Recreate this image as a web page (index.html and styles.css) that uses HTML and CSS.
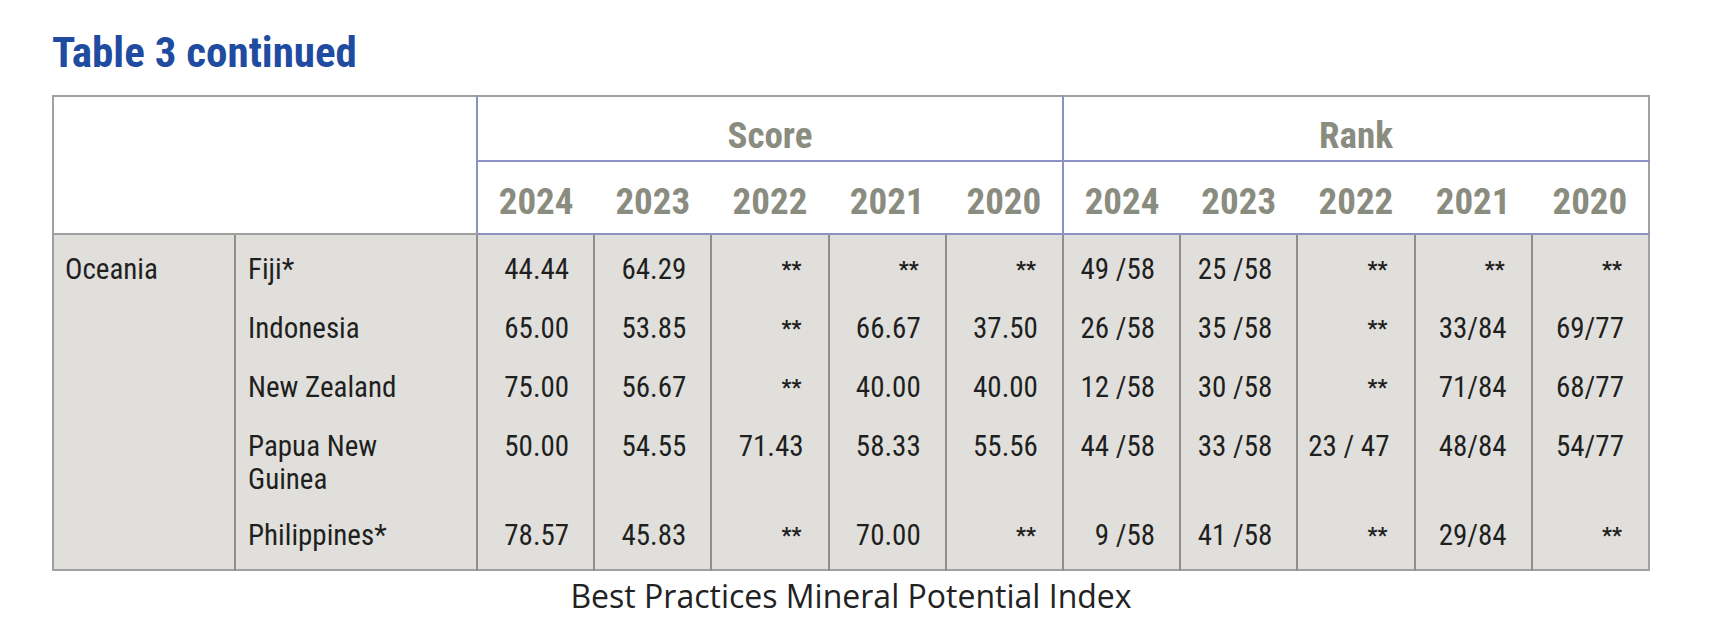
FILE: index.html
```html
<!DOCTYPE html>
<html lang="en">
<head>
<meta charset="utf-8">
<title>Table 3 continued</title>
<link rel="stylesheet" href="styles.css">
</head>
<body>
<div class="page">
  <h1 class="title">Table 3 continued</h1>
  <table class="data">
    <colgroup>
      <col class="c-region">
      <col class="c-country">
      <col span="10" class="c-num">
    </colgroup>
    <thead>
      <tr class="group-row">
        <th class="blank" colspan="2" rowspan="2"></th>
        <th class="group" colspan="5">Score</th>
        <th class="group" colspan="5">Rank</th>
      </tr>
      <tr class="year-row">
        <th class="yr first">2024</th>
        <th class="yr">2023</th>
        <th class="yr">2022</th>
        <th class="yr">2021</th>
        <th class="yr">2020</th>
        <th class="yr first">2024</th>
        <th class="yr">2023</th>
        <th class="yr">2022</th>
        <th class="yr">2021</th>
        <th class="yr">2020</th>
      </tr>
    </thead>
    <tbody>
      <tr>
        <td class="region" rowspan="5">Oceania</td>
        <td class="country">Fiji*</td>
        <td class="num">44.44</td>
        <td class="num">64.29</td>
        <td class="num na">**</td>
        <td class="num na">**</td>
        <td class="num na">**</td>
        <td class="num">49 /58</td>
        <td class="num">25 /58</td>
        <td class="num na">**</td>
        <td class="num na">**</td>
        <td class="num na">**</td>
      </tr>
      <tr>
        <td class="country">Indonesia</td>
        <td class="num">65.00</td>
        <td class="num">53.85</td>
        <td class="num na">**</td>
        <td class="num">66.67</td>
        <td class="num">37.50</td>
        <td class="num">26 /58</td>
        <td class="num">35 /58</td>
        <td class="num na">**</td>
        <td class="num">33/84</td>
        <td class="num">69/77</td>
      </tr>
      <tr>
        <td class="country">New Zealand</td>
        <td class="num">75.00</td>
        <td class="num">56.67</td>
        <td class="num na">**</td>
        <td class="num">40.00</td>
        <td class="num">40.00</td>
        <td class="num">12 /58</td>
        <td class="num">30 /58</td>
        <td class="num na">**</td>
        <td class="num">71/84</td>
        <td class="num">68/77</td>
      </tr>
      <tr class="tall">
        <td class="country">Papua New<br>Guinea</td>
        <td class="num">50.00</td>
        <td class="num">54.55</td>
        <td class="num">71.43</td>
        <td class="num">58.33</td>
        <td class="num">55.56</td>
        <td class="num">44 /58</td>
        <td class="num">33 /58</td>
        <td class="num">23 / 47</td>
        <td class="num">48/84</td>
        <td class="num">54/77</td>
      </tr>
      <tr class="last">
        <td class="country">Philippines*</td>
        <td class="num">78.57</td>
        <td class="num">45.83</td>
        <td class="num na">**</td>
        <td class="num">70.00</td>
        <td class="num na">**</td>
        <td class="num">9 /58</td>
        <td class="num">41 /58</td>
        <td class="num na">**</td>
        <td class="num">29/84</td>
        <td class="num na">**</td>
      </tr>
    </tbody>
  </table>
  <p class="caption">Best Practices Mineral Potential Index</p>
</div>
</body>
</html>
```

FILE: styles.css
```css
html, body {
  margin: 0;
  padding: 0;
  background: #ffffff;
}

.page {
  width: 1598px;
  margin-left: 52px;
  padding-top: 31px;
}

.title {
  margin: 0 0 21px 0;
  font-family: "Roboto Condensed", "Liberation Sans Narrow", "DejaVu Sans Condensed", Roboto, sans-serif;
  font-weight: 700;
  font-size: 43px;
  line-height: 43px;
  color: #1f4ba1;
}

.data {
  width: 1598px;
  table-layout: fixed;
  border-collapse: collapse;
  border: 2px solid #a0a0a0;
  font-family: "Roboto Condensed", "Liberation Sans Narrow", "DejaVu Sans Condensed", Roboto, sans-serif;
}

.c-region { width: 182px; }
.c-country { width: 242px; }

.data th {
  padding: 0;
  font-weight: 700;
  font-size: 37px;
  line-height: 40px;
  color: #8a8c80;
  background: #ffffff;
  text-align: center;
}

.data .blank {
  border-bottom: 2px solid #a0a0a0;
}

.data .group {
  height: 63px;
  padding: 19px 0 4px;
  box-sizing: border-box;
  border-left: 2px solid #8c92c4;
  border-bottom: 2px solid #8c92c4;
  vertical-align: top;
}

.data .yr {
  height: 71px;
  padding: 20px 0 11px;
  box-sizing: border-box;
  border-bottom: 2px solid #8c92c4;
  vertical-align: top;
}

.data .yr.first {
  border-left: 2px solid #8c92c4;
}

.data td {
  background: #e0dfdb;
  color: #1f1f1f;
  font-size: 29px;
  line-height: 33px;
  padding: 18px 24px 8px 0;
  vertical-align: top;
  border-left: 2px solid #8e8e8e;
}

.data td.region {
  padding-left: 11px;
  padding-right: 0;
  border-left: none;
}

.data td.country {
  padding-left: 12px;
  padding-right: 0;
}

.data td.num {
  text-align: right;
}

.data td.na {
  font-size: 22px;
  font-weight: 700;
  padding-right: 26px;
}

.data tr.tall td {
  padding-bottom: 5px;
}

.data tr.last td {
  padding-bottom: 17px;
}

.caption {
  margin: 6px 0 0 0;
  text-align: center;
  font-family: "Open Sans", "Noto Sans", sans-serif;
  font-size: 32px;
  line-height: 38px;
  color: #222222;
}
```
